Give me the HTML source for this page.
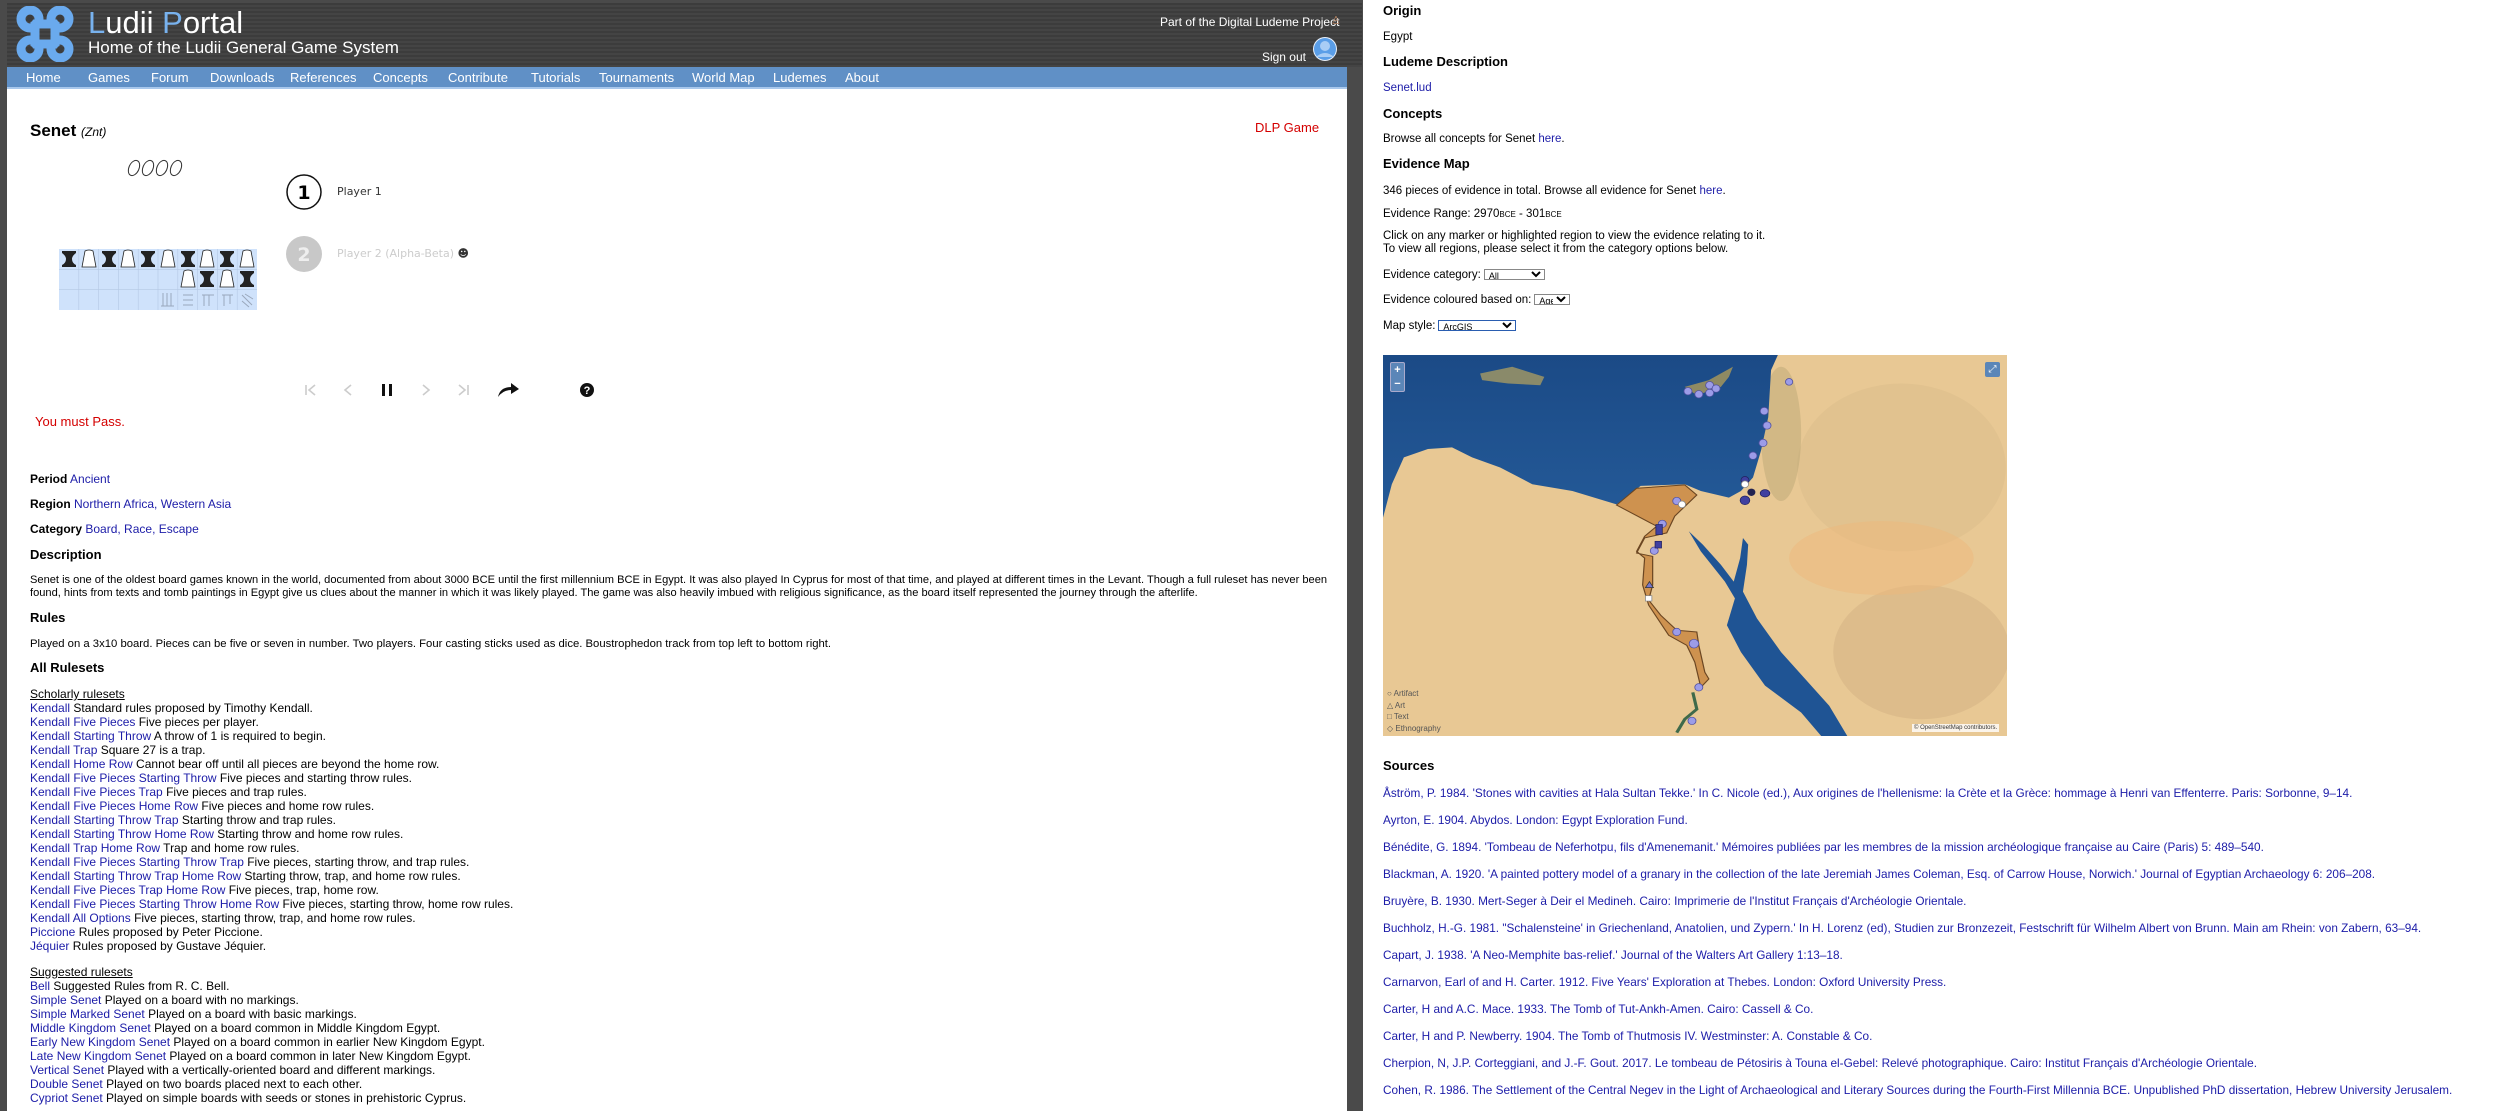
<!DOCTYPE html>
<html><head><meta charset="utf-8">
<style>
*{margin:0;padding:0;box-sizing:border-box}
body{width:2500px;height:1111px;overflow:hidden;background:#fff;font-family:"Liberation Sans",Arial,sans-serif;position:relative;color:#000}
.a{position:absolute;white-space:nowrap;line-height:16px}
a,.l{color:#1c1ca8;text-decoration:none}
.h{font-weight:bold;font-size:13px}
.t{font-size:12px}
.r{color:#d40000}
#frame{position:absolute;left:0;top:0;width:1363px;height:1111px;background:#4a4a4a}
#left{position:absolute;left:7px;top:89px;width:1340px;height:1022px;background:#fff}
#hdr{position:absolute;left:7px;top:3px;width:1355px;height:64px;background:repeating-linear-gradient(180deg,#3c3c3c 0 2px,#444 2px 4px)}
#nav{position:absolute;left:7px;top:67px;width:1340px;height:22px;background:#6090c6;border-bottom:2px solid #a9c8ec}
#nav span{position:absolute;top:3px;color:#fff;font-size:13px;line-height:16px}
.rs div{height:14px;line-height:14px;font-size:12px;white-space:nowrap}
select{font-size:9px;height:11px;border:1px solid #888;background:#fff;vertical-align:middle;margin-left:3px}
</style></head><body>
<div id="frame"></div>
<div id="hdr"></div>
<div id="left"></div>
<div id="nav">
<span style="left:19px">Home</span><span style="left:81px">Games</span><span style="left:144px">Forum</span><span style="left:203px">Downloads</span><span style="left:283px">References</span><span style="left:366px">Concepts</span><span style="left:441px">Contribute</span><span style="left:524px">Tutorials</span><span style="left:592px">Tournaments</span><span style="left:685px">World Map</span><span style="left:766px">Ludemes</span><span style="left:838px">About</span>
</div>
<svg style="position:absolute;left:16px;top:6px" width="58" height="56" viewBox="0 0 58 56">
<g fill="none" stroke="#6aaaee" stroke-width="9">
<circle cx="14" cy="13" r="9"/><circle cx="44" cy="13" r="9"/><circle cx="14" cy="43" r="9"/><circle cx="44" cy="43" r="9"/>
<rect x="19" y="18" width="20" height="20"/>
</g>
<g fill="#3c3c3c"><circle cx="14" cy="13" r="3"/><circle cx="44" cy="13" r="3"/><circle cx="14" cy="43" r="3"/><circle cx="44" cy="43" r="3"/></g>
</svg>
<div class="a" style="left:88px;top:6px;font-size:31px;line-height:34px;color:#fff"><span style="color:#78b2ee">L</span>udii <span style="color:#78b2ee">P</span>ortal</div>
<div class="a" style="left:88px;top:38px;font-size:17px;line-height:20px;color:#fff">Home of the Ludii General Game System</div>
<div class="a" style="left:1160px;top:14px;font-size:12px;color:#fff;width:168px;text-align:right">Part of the Digital Ludeme Project</div>
<div class="a" style="left:1331px;top:13px;font-size:11px;color:#b08060">♙</div>
<div class="a" style="left:1250px;top:49px;font-size:12px;color:#fff;width:56px;text-align:right">Sign out</div>
<svg style="position:absolute;left:1312px;top:36px" width="26" height="26" viewBox="0 0 26 26"><circle cx="13" cy="13" r="12" fill="#e8f0fa"/><circle cx="13" cy="13" r="11" fill="#5a9ee8"/><circle cx="13" cy="10" r="5" fill="#a9cdf5"/><path d="M4 21 Q13 13 22 21" fill="#a9cdf5"/></svg>

<div class="a" style="left:30px;top:121px;font-size:17px;line-height:20px;font-weight:bold">Senet <span style="font-weight:normal;font-style:italic;font-size:12px">(Znt)</span></div>
<div class="a r" style="left:1255px;top:120px;font-size:13px;width:60px;text-align:right">DLP Game</div>
<svg style="position:absolute;left:126px;top:158px" width="64" height="20" viewBox="0 0 64 20"><g fill="none" stroke="#333" stroke-width="1"><ellipse cx="8" cy="10" rx="5" ry="8" transform="rotate(25 8 10)"/><ellipse cx="22" cy="10" rx="5" ry="8" transform="rotate(25 22 10)"/><ellipse cx="36" cy="10" rx="5" ry="8" transform="rotate(25 36 10)"/><ellipse cx="50" cy="10" rx="5" ry="8" transform="rotate(25 50 10)"/></g></svg>
<svg style="position:absolute;left:59px;top:249px" width="198" height="61" viewBox="0 0 198 61">
<rect width="198" height="61" fill="#cfe2fb"/>
<g stroke="#b4c8e4" stroke-width="0.6"><path d="M19.8 0V61M39.6 0V61M59.4 0V61M79.2 0V61M99 0V61M118.8 0V61M138.6 0V61M158.4 0V61M178.2 0V61M0 20.3H198M0 40.6H198"/></g>
<defs><path id="bk" d="M-7 -8H7V-6Q3 -3 3 0Q3 4 7 6V8H-7V6Q-3 4 -3 0Q-3 -3 -7 -6Z" fill="#222"/><path id="wh" d="M-4 -8Q0 -10 4 -8L7 8H-7Z" fill="#fff" stroke="#222" stroke-width="0.8"/></defs>
<use href="#bk" x="10" y="10"/><use href="#wh" x="30" y="10"/><use href="#bk" x="50" y="10"/><use href="#wh" x="69" y="10"/><use href="#bk" x="89" y="10"/><use href="#wh" x="109" y="10"/><use href="#bk" x="129" y="10"/><use href="#wh" x="148" y="10"/><use href="#bk" x="168" y="10"/><use href="#wh" x="188" y="10"/>
<use href="#wh" x="129" y="30"/><use href="#bk" x="148" y="30"/><use href="#wh" x="168" y="30"/><use href="#bk" x="188" y="30"/>
<g stroke="#9aa8bc" stroke-width="1" fill="none"><path d="M104 44V57M108 44V57M112 44V57M102 57H115M124 46H134M124 51H134M124 56H134M143 46H155M145 46V57M150 46V57M163 46H174M165 46V57M171 46V55M183 46L193 56M183 52L190 58M186 45L194 50"/></g>
</svg>
<svg style="position:absolute;left:285px;top:173px" width="38" height="100" viewBox="0 0 38 100"><circle cx="19" cy="19" r="17" fill="#fff" stroke="#111" stroke-width="1.5"/><text x="19" y="26" font-family="DejaVu Sans" font-weight="bold" font-size="19" text-anchor="middle">1</text><circle cx="19" cy="81" r="18" fill="#c8c8c8"/><text x="19" y="88" font-family="DejaVu Sans" font-weight="bold" font-size="19" text-anchor="middle" fill="#eee">2</text></svg>
<div class="a" style="left:337px;top:184px;font-size:11px;font-family:'DejaVu Sans',sans-serif;color:#333">Player 1</div>
<div class="a" style="left:337px;top:246px;font-size:11px;font-family:'DejaVu Sans',sans-serif;color:#ccc">Player 2 (Alpha-Beta) <span style="color:#333">☻</span></div>
<svg style="position:absolute;left:295px;top:378px" width="305" height="24" viewBox="0 0 305 24">
<g stroke="#ccc" stroke-width="1.6" fill="none"><path d="M11 7V17M20 7L14 12L20 17M56 7L50 12L56 17M128 7L134 12L128 17M164 7L170 12L164 17M173 7V17"/></g>
<rect x="87" y="6" width="3" height="12" fill="#111"/><rect x="94" y="6" width="3" height="12" fill="#111"/>
<path d="M203 19Q205 9 216 9V5L224 11L216 16V12Q208 12 203 19Z" fill="#111"/>
<circle cx="292" cy="12" r="7" fill="#111"/><text x="292" y="16" font-size="11" font-weight="bold" fill="#fff" text-anchor="middle" font-family="Liberation Sans">?</text>
</svg>
<div class="a r" style="left:35px;top:414px;font-size:13px">You must Pass.</div>

<div class="a t" style="left:30px;top:471px"><b>Period</b> <a>Ancient</a></div>
<div class="a t" style="left:30px;top:496px"><b>Region</b> <a>Northern Africa, Western Asia</a></div>
<div class="a t" style="left:30px;top:521px"><b>Category</b> <a>Board, Race, Escape</a></div>
<div class="a h" style="left:30px;top:547px">Description</div>
<div class="a t" style="left:30px;top:574px;white-space:normal;width:1300px;line-height:12.8px;font-size:11.1px">Senet is one of the oldest board games known in the world, documented from about 3000 BCE until the first millennium BCE in Egypt. It was also played In Cyprus for most of that time, and played at different times in the Levant. Though a full ruleset has never been found, hints from texts and tomb paintings in Egypt give us clues about the manner in which it was likely played. The game was also heavily imbued with religious significance, as the board itself represented the journey through the afterlife.</div>
<div class="a h" style="left:30px;top:610px">Rules</div>
<div class="a t" style="left:30px;top:636px;font-size:11.3px">Played on a 3x10 board. Pieces can be five or seven in number. Two players. Four casting sticks used as dice. Boustrophedon track from top left to bottom right.</div>
<div class="a h" style="left:30px;top:660px">All Rulesets</div>
<div class="a rs" style="left:30px;top:687px">
<div style="text-decoration:underline">Scholarly rulesets</div>
<div><a>Kendall</a> Standard rules proposed by Timothy Kendall.</div>
<div><a>Kendall Five Pieces</a> Five pieces per player.</div>
<div><a>Kendall Starting Throw</a> A throw of 1 is required to begin.</div>
<div><a>Kendall Trap</a> Square 27 is a trap.</div>
<div><a>Kendall Home Row</a> Cannot bear off until all pieces are beyond the home row.</div>
<div><a>Kendall Five Pieces Starting Throw</a> Five pieces and starting throw rules.</div>
<div><a>Kendall Five Pieces Trap</a> Five pieces and trap rules.</div>
<div><a>Kendall Five Pieces Home Row</a> Five pieces and home row rules.</div>
<div><a>Kendall Starting Throw Trap</a> Starting throw and trap rules.</div>
<div><a>Kendall Starting Throw Home Row</a> Starting throw and home row rules.</div>
<div><a>Kendall Trap Home Row</a> Trap and home row rules.</div>
<div><a>Kendall Five Pieces Starting Throw Trap</a> Five pieces, starting throw, and trap rules.</div>
<div><a>Kendall Starting Throw Trap Home Row</a> Starting throw, trap, and home row rules.</div>
<div><a>Kendall Five Pieces Trap Home Row</a> Five pieces, trap, home row.</div>
<div><a>Kendall Five Pieces Starting Throw Home Row</a> Five pieces, starting throw, home row rules.</div>
<div><a>Kendall All Options</a> Five pieces, starting throw, trap, and home row rules.</div>
<div><a>Piccione</a> Rules proposed by Peter Piccione.</div>
<div><a>Jéquier</a> Rules proposed by Gustave Jéquier.</div>
<div style="height:12px"></div>
<div style="text-decoration:underline">Suggested rulesets</div>
<div><a>Bell</a> Suggested Rules from R. C. Bell.</div>
<div><a>Simple Senet</a> Played on a board with no markings.</div>
<div><a>Simple Marked Senet</a> Played on a board with basic markings.</div>
<div><a>Middle Kingdom Senet</a> Played on a board common in Middle Kingdom Egypt.</div>
<div><a>Early New Kingdom Senet</a> Played on a board common in earlier New Kingdom Egypt.</div>
<div><a>Late New Kingdom Senet</a> Played on a board common in later New Kingdom Egypt.</div>
<div><a>Vertical Senet</a> Played with a vertically-oriented board and different markings.</div>
<div><a>Double Senet</a> Played on two boards placed next to each other.</div>
<div><a>Cypriot Senet</a> Played on simple boards with seeds or stones in prehistoric Cyprus.</div>
</div>

<div class="a h" style="left:1383px;top:3px">Origin</div>
<div class="a t" style="left:1383px;top:29px;font-size:11.5px">Egypt</div>
<div class="a h" style="left:1383px;top:54px">Ludeme Description</div>
<div class="a t" style="left:1383px;top:80px;font-size:11.5px"><a>Senet.lud</a></div>
<div class="a h" style="left:1383px;top:106px">Concepts</div>
<div class="a t" style="left:1383px;top:131px;font-size:11.5px">Browse all concepts for Senet <a>here</a>.</div>
<div class="a h" style="left:1383px;top:156px">Evidence Map</div>
<div class="a t" style="left:1383px;top:183px;font-size:11.5px">346 pieces of evidence in total. Browse all evidence for Senet <a>here</a>.</div>
<div class="a t" style="left:1383px;top:206px;font-size:11.5px">Evidence Range: 2970<span style="font-size:8px">BCE</span> - 301<span style="font-size:8px">BCE</span></div>
<div class="a t" style="left:1383px;top:230px;line-height:13px;font-size:11.5px">Click on any marker or highlighted region to view the evidence relating to it.<br>To view all regions, please select it from the category options below.</div>
<div class="a t" style="left:1383px;top:267px;font-size:11.5px">Evidence category:<select style="width:61px"><option>All</option></select></div>
<div class="a t" style="left:1383px;top:292px;font-size:11.5px">Evidence coloured based on:<select style="width:36px"><option>Age</option></select></div>
<div class="a t" style="left:1383px;top:318px;font-size:11.5px">Map style:<select style="width:78px;border:1.5px solid #2a5db0"><option>ArcGIS</option></select></div>

<svg style="position:absolute;left:1383px;top:355px" width="624" height="381" viewBox="8 15 1555 1135" preserveAspectRatio="none">
<defs><linearGradient id="sea" x1="0" y1="0" x2="0" y2="1"><stop offset="0" stop-color="#1b4a86"/><stop offset="1" stop-color="#245a98"/></linearGradient></defs>
<rect x="8" y="15" width="1555" height="1135" fill="#e8c894"/>
<ellipse cx="1300" cy="350" rx="260" ry="250" fill="#d6b887" opacity="0.4"/>
<ellipse cx="1350" cy="900" rx="220" ry="200" fill="#c9a77a" opacity="0.35"/>
<ellipse cx="1250" cy="620" rx="230" ry="110" fill="#eeb77c" opacity="0.5"/>
<ellipse cx="1000" cy="250" rx="50" ry="200" fill="#a99a6a" opacity="0.35"/>
<path fill="url(#sea)" d="M8,15 L992,15 L975,60 L968,200 L950,300 L930,380 L900,420 L870,440 L800,420 L760,400 L650,405 L590,460 L480,420 L380,400 L300,350 L230,320 L180,290 L120,295 L60,320 L30,400 L8,500 Z"/>
<path fill="#8a8a6a" d="M250,70 L330,50 L410,80 L400,105 L320,100 L255,90Z"/>
<path fill="#8f8a62" d="M760,110 L820,90 L880,50 L870,80 L850,110 L790,135Z"/>
<path fill="#1f5494" d="M770,540 L800,600 L860,690 L885,740 L865,820 L900,900 L960,1000 L1050,1080 L1100,1150 L1165,1150 L1120,1060 L1000,900 L940,800 L905,720 L915,640 L918,580 L905,560 L898,620 L882,690 L850,640 L805,580 Z"/>
<path fill="#c98843" fill-opacity="0.85" stroke="#6b4622" stroke-width="3" d="M590,462 L640,412 L760,402 L790,432 L735,495 L715,545 L660,560 L640,605 L680,615 L680,700 L670,745 L700,790 L740,835 L790,840 L795,880 L810,960 L820,980 L800,1005 L785,930 L765,880 L720,850 L670,760 L655,700 L660,620 L640,600 L660,555 L690,525 Z"/>
<path d="M780,1020 L790,1070 L760,1100 L740,1140" stroke="#3f6a4a" stroke-width="8" fill="none"/>
<g fill="#9c9ce8" stroke="#5050a0" stroke-width="2">
<ellipse cx="768" cy="123" rx="10" ry="11"/><ellipse cx="795" cy="132" rx="10" ry="11"/><ellipse cx="822" cy="105" rx="10" ry="11"/><ellipse cx="838" cy="115" rx="10" ry="11"/><ellipse cx="822" cy="128" rx="10" ry="11"/><ellipse cx="1020" cy="95" rx="9" ry="10"/>
<ellipse cx="958" cy="182" rx="10" ry="11"/><ellipse cx="965" cy="225" rx="10" ry="11"/><ellipse cx="955" cy="277" rx="10" ry="11"/><ellipse cx="930" cy="315" rx="10" ry="11"/>
<ellipse cx="740" cy="450" rx="10" ry="11"/><ellipse cx="704" cy="518" rx="10" ry="11"/><ellipse cx="684" cy="598" rx="10" ry="11"/><ellipse cx="740" cy="840" rx="10" ry="11"/><ellipse cx="783" cy="875" rx="12" ry="13"/><ellipse cx="795" cy="1005" rx="10" ry="11"/><ellipse cx="778" cy="1105" rx="10" ry="11"/>
</g>
<g fill="#4040a0" stroke="#222260" stroke-width="2"><ellipse cx="910" cy="388" rx="10" ry="11"/><ellipse cx="910" cy="448" rx="12" ry="13"/><ellipse cx="960" cy="427" rx="12" ry="11"/><rect x="688" y="520" width="16" height="30"/><rect x="686" y="570" width="16" height="20"/></g>
<g fill="#222250"><ellipse cx="926" cy="424" rx="10" ry="11"/></g>
<g fill="#fff" stroke="#888" stroke-width="2"><ellipse cx="753" cy="460" rx="9" ry="10"/><ellipse cx="910" cy="400" rx="9" ry="10"/><rect x="662" y="732" width="16" height="16"/></g>
<path d="M672,690 L682,708 L662,708Z" fill="#7777cc" stroke="#333" stroke-width="2"/>
</svg>
<div style="position:absolute;left:1390px;top:362px;width:15px;height:30px;background:#5b86b8;border:1px solid #aac;border-radius:2px;color:#fff;font-size:11px;line-height:14px;text-align:center;font-weight:bold">+<br>−</div>
<div style="position:absolute;left:1985px;top:362px;width:15px;height:15px;background:#5b86b8;border-radius:2px;color:#fff;font-size:10px;line-height:15px;text-align:center">⤢</div>
<div class="a" style="left:1387px;top:688px;font-size:8px;line-height:11.5px;color:#555">○ Artifact<br>△ Art<br>□ Text<br>◇ Ethnography</div>
<div class="a" style="left:1912px;top:724px;font-size:6px;line-height:8px;color:#333;background:rgba(255,255,255,.8);padding:0 2px">© OpenStreetMap contributors.</div>

<div class="a h" style="left:1383px;top:758px">Sources</div>
<div class="a t" style="left:1383px;top:780px;line-height:27px;color:#1c1ca8;font-size:11.8px">
Åström, P. 1984. 'Stones with cavities at Hala Sultan Tekke.' In C. Nicole (ed.), Aux origines de l'hellenisme: la Crète et la Grèce: hommage à Henri van Effenterre. Paris: Sorbonne, 9–14.<br>
Ayrton, E. 1904. Abydos. London: Egypt Exploration Fund.<br>
Bénédite, G. 1894. 'Tombeau de Neferhotpu, fils d'Amenemanit.' Mémoires publiées par les membres de la mission archéologique française au Caire (Paris) 5: 489–540.<br>
Blackman, A. 1920. 'A painted pottery model of a granary in the collection of the late Jeremiah James Coleman, Esq. of Carrow House, Norwich.' Journal of Egyptian Archaeology 6: 206–208.<br>
Bruyère, B. 1930. Mert-Seger à Deir el Medineh. Cairo: Imprimerie de l'Institut Français d'Archéologie Orientale.<br>
Buchholz, H.-G. 1981. "Schalensteine' in Griechenland, Anatolien, und Zypern.' In H. Lorenz (ed), Studien zur Bronzezeit, Festschrift für Wilhelm Albert von Brunn. Main am Rhein: von Zabern, 63–94.<br>
Capart, J. 1938. 'A Neo-Memphite bas-relief.' Journal of the Walters Art Gallery 1:13–18.<br>
Carnarvon, Earl of and H. Carter. 1912. Five Years' Exploration at Thebes. London: Oxford University Press.<br>
Carter, H and A.C. Mace. 1933. The Tomb of Tut-Ankh-Amen. Cairo: Cassell &amp; Co.<br>
Carter, H and P. Newberry. 1904. The Tomb of Thutmosis IV. Westminster: A. Constable &amp; Co.<br>
Cherpion, N, J.P. Corteggiani, and J.-F. Gout. 2017. Le tombeau de Pétosiris à Touna el-Gebel: Relevé photographique. Cairo: Institut Français d'Archéologie Orientale.<br>
Cohen, R. 1986. The Settlement of the Central Negev in the Light of Archaeological and Literary Sources during the Fourth-First Millennia BCE. Unpublished PhD dissertation, Hebrew University Jerusalem.
</div>
</body></html>
